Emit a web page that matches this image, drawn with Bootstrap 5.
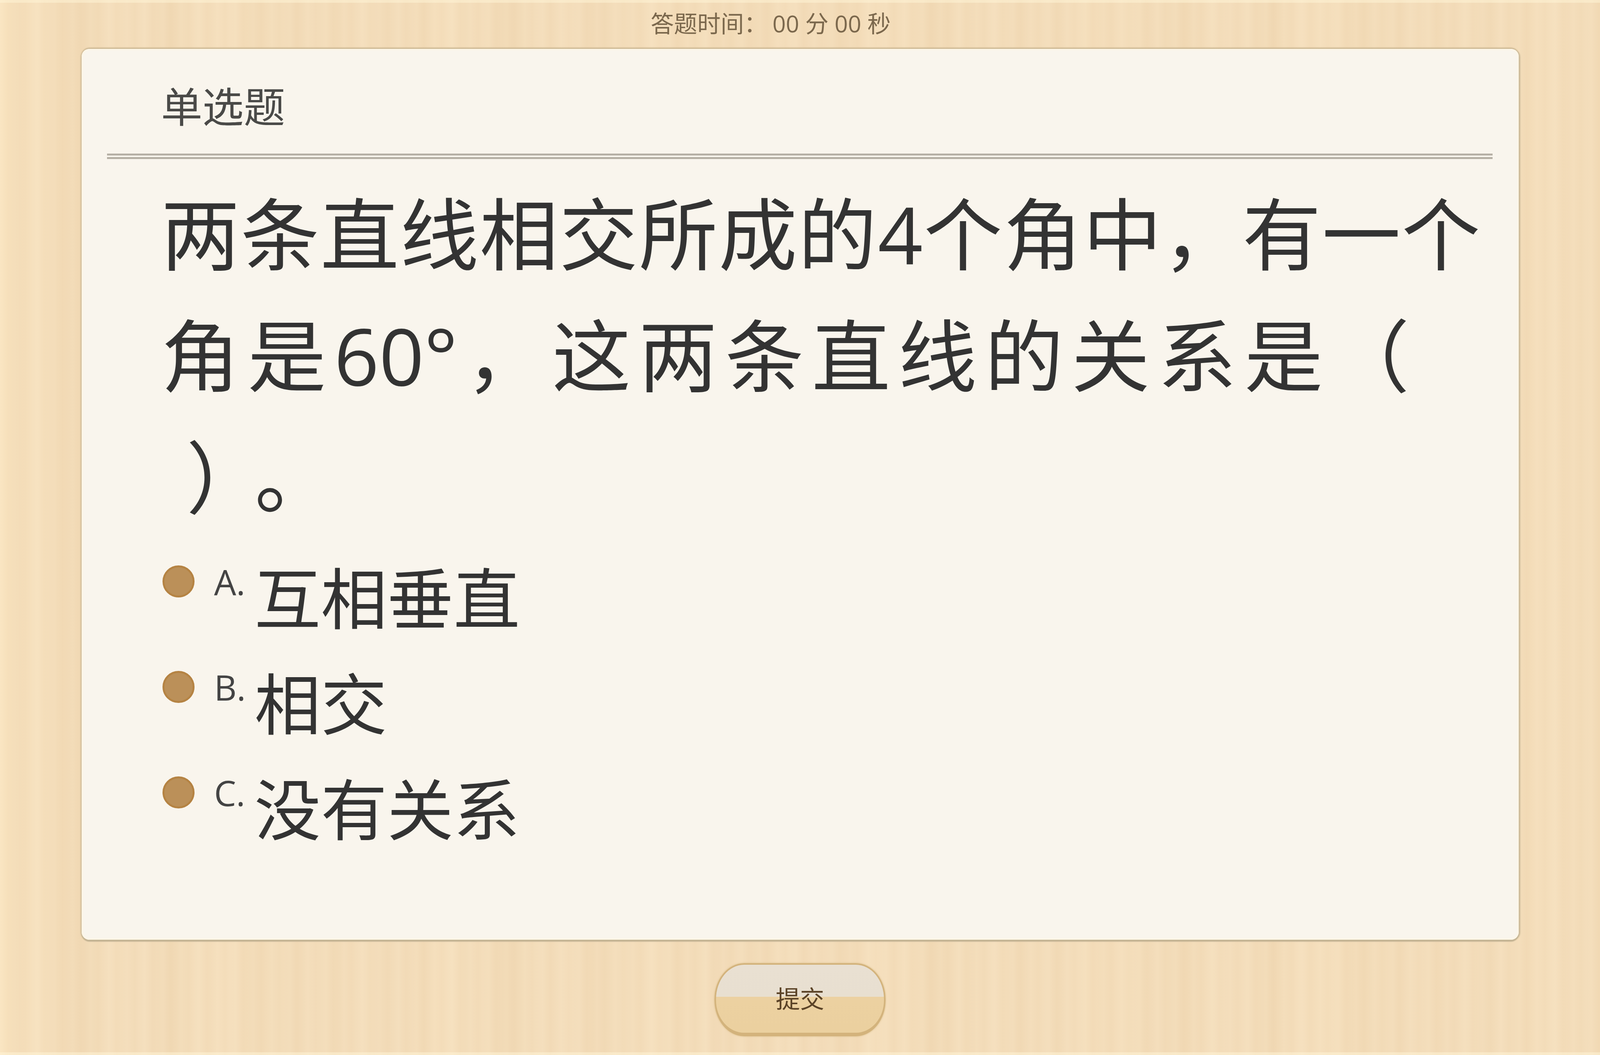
<!DOCTYPE html>
<html lang="zh-CN">
<head>
<meta charset="utf-8">
<title>单选题</title>
<link href="https://cdn.jsdelivr.net/npm/bootstrap@5.3.0/dist/css/bootstrap.min.css" rel="stylesheet">
<style>
html,body{height:100%;}
body{
  height:100vh;overflow:hidden;margin:0;
  font-family:"Open Sans","Noto Sans CJK SC",sans-serif;
  background-color:#f3dcba;
  background-image:
    linear-gradient(90deg,rgba(255,236,200,.55) 0,rgba(240,212,170,.25) 1.2vw,rgba(255,238,205,.3) 2.4vw,rgba(240,212,170,.2) 3.6vw,rgba(240,214,170,0) 5vw),
    repeating-linear-gradient(90deg,rgba(255,243,215,.1) 0,rgba(255,243,215,0) .25vw,rgba(222,190,140,.06) .5vw,rgba(255,243,215,0) .8vw,rgba(255,243,215,.08) 1.13vw),
    repeating-linear-gradient(90deg,rgba(230,198,150,.1) 0,rgba(255,240,210,.1) 1.7vw,rgba(230,198,150,.04) 2.6vw,rgba(255,240,210,.08) 3.7vw,rgba(230,198,150,.1) 5.3vw),
    repeating-linear-gradient(90deg,rgba(255,236,200,.14) 0,rgba(232,205,158,.1) 4.3vw,rgba(255,236,200,.06) 7.9vw,rgba(232,205,158,.08) 11vw,rgba(255,236,200,.14) 13.7vw);
  box-shadow:inset 0 7px 0 rgba(255,245,215,.5),inset 0 -7px 0 rgba(255,245,215,.5);
}
.timer-bar{height:125px;padding:0 3.668vw 4px 0;font-size:1.459vw;color:#7b684d;line-height:1;}
.timer-bar span{margin-left:.22em;}
.paper{
  height:2280px;margin:0 5.084vw 0 5.105vw;
  background:#f9f5ed;border:0;border-radius:20px;
  box-shadow:inset 0 0 0 4px #fcf6e8,0 5px 2px #c4b494,4px 1px 3px #ccba98,-3px 1px 3px #d3bf9b,0 -3px 3px #c9b48f;
  color:#333;
}
.kind-head{height:268px;padding-left:4.96vw;font-size:2.584vw;color:#4a4a48;line-height:294px;}
.double-rule{height:14px;margin:0 1.625vw 0 1.584vw;border-bottom:14px double #b6b0a5;}
.stem{margin:36px 2.396vw 0 4.96vw;font-size:4.918vw;line-height:311px;text-align:justify;color:#333;}
.paren-gap{display:inline-block;width:.8em;}
.close-paren{margin:0 .37em 0 .32em;}
.option-list{margin:55px 0 0 5.043vw;}
.option-row{height:270px;}
.dot{width:2.021vw;height:2.021vw;flex:none;background:#bb9059;border:5px solid #b58343;border-radius:50%;margin-top:calc(57px - 1.01vw);}
.opt-key{width:3.73vw;flex:none;padding-left:1.209vw;font-size:2.188vw;line-height:114px;color:#444;}
.opt-text{font-size:4.15vw;line-height:200px;color:#333;}
.submit-row{height:295px;padding-top:60px;}
.submit-btn{
  width:10.69vw;height:187px;padding:0;font-size:1.521vw;line-height:1;color:#5b4327;
  border:4px solid #d3b37c;border-bottom-width:9px;border-radius:76px/92px;
  background:linear-gradient(180deg,#e9e0d2 0,#e8dfd0 47%,#ecd1a1 47%,#ebd09f 100%);
  box-shadow:0 0 4px #d8bb85;
}
</style>
</head>
<body>
<div class="timer-bar d-flex align-items-center justify-content-center">答题时间：<span>00 分 00 秒</span></div>
<main class="card paper">
  <div class="kind-head">单选题</div>
  <div class="double-rule"></div>
  <div class="stem">两条直线相交所成的4个角中，有一个角是60°，这两条直线的关系是（<span class="paren-gap"></span><wbr><span class="close-paren">）</span>。</div>
  <div class="option-list">
    <div class="option-row d-flex"><div class="dot"></div><div class="opt-key">A.</div><div class="opt-text">互相垂直</div></div>
    <div class="option-row d-flex"><div class="dot"></div><div class="opt-key">B.</div><div class="opt-text">相交</div></div>
    <div class="option-row d-flex"><div class="dot"></div><div class="opt-key">C.</div><div class="opt-text">没有关系</div></div>
  </div>
</main>
<div class="submit-row d-flex justify-content-center"><button type="button" class="btn submit-btn">提交</button></div>
<script src="https://cdn.jsdelivr.net/npm/bootstrap@5.3.0/dist/js/bootstrap.bundle.min.js"></script>
</body>
</html>
